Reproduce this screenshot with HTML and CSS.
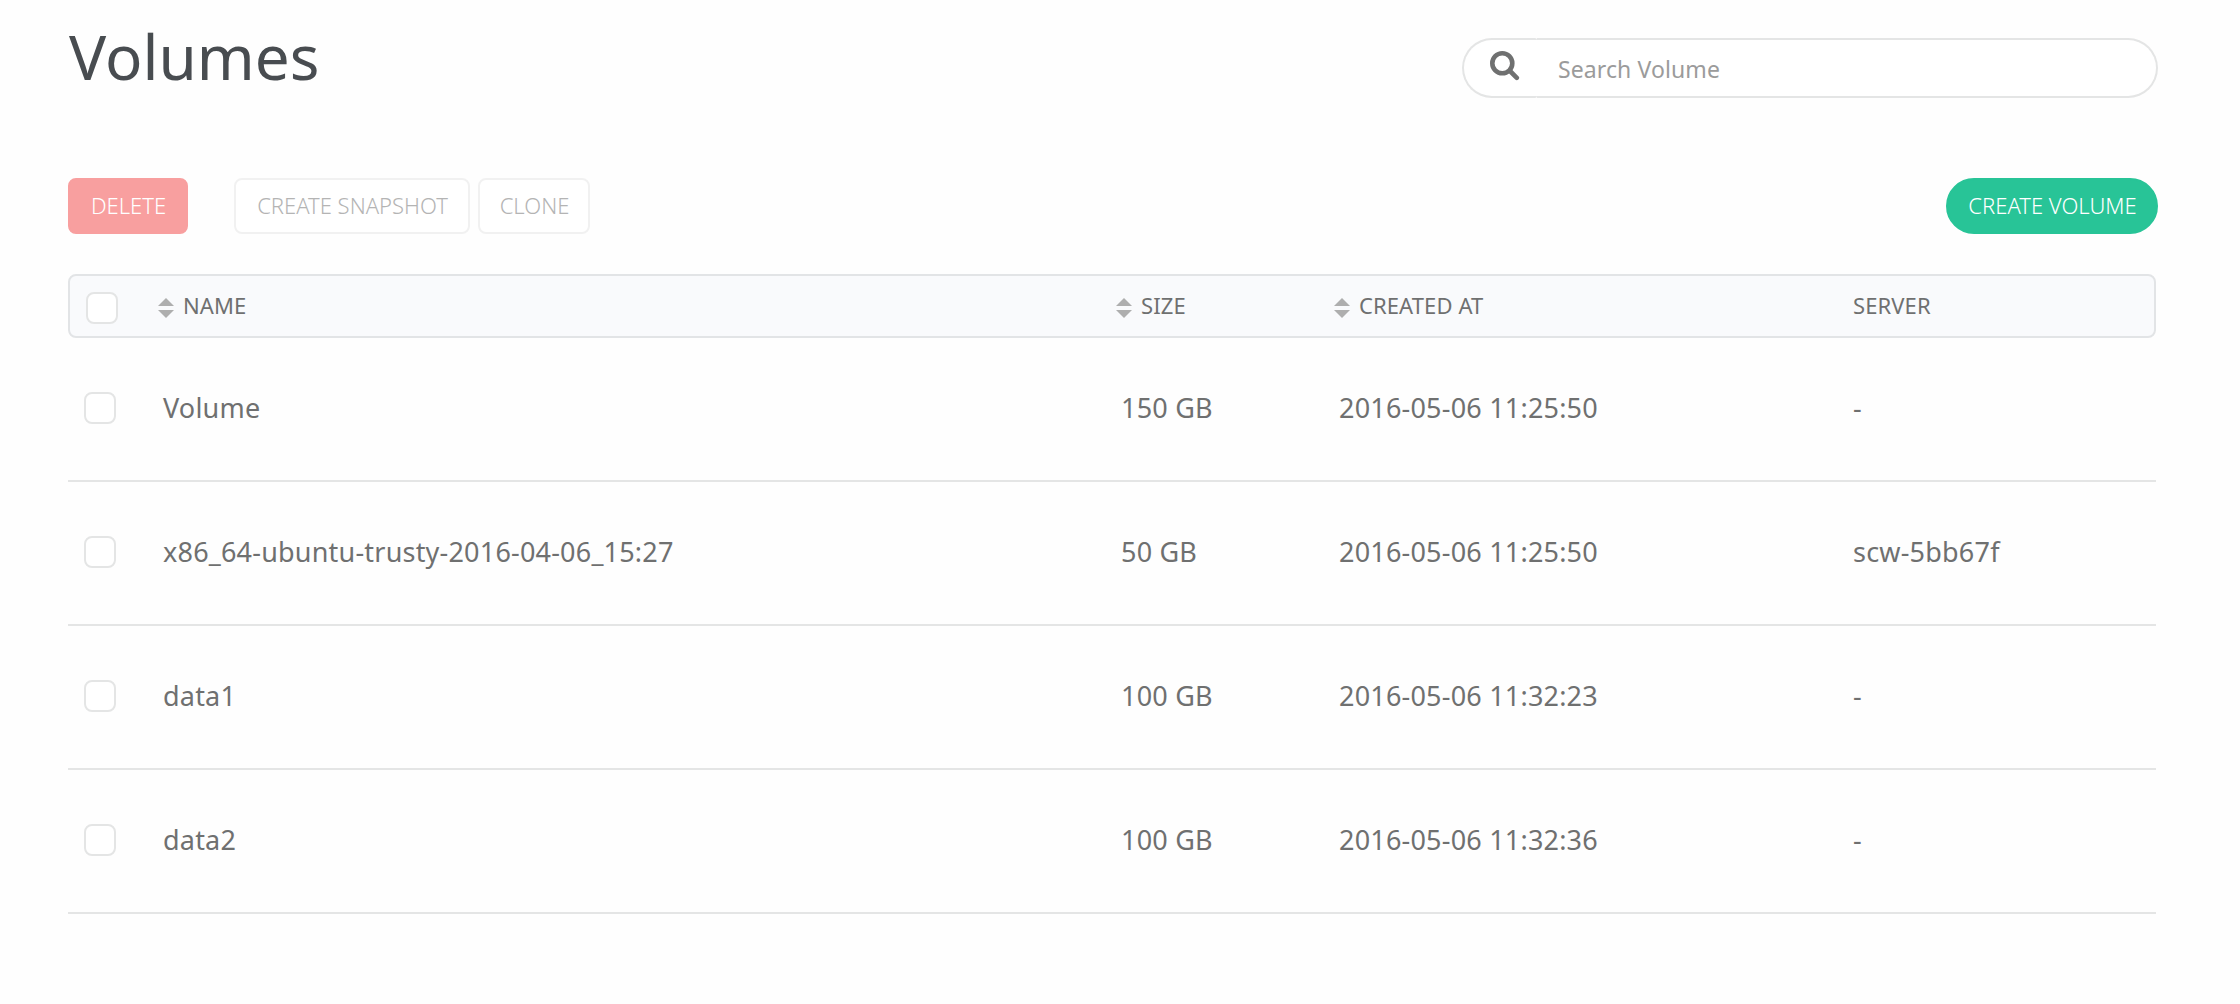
FILE: index.html
```html
<!DOCTYPE html>
<html lang="en">
  <head>
    <meta charset="UTF-8" />
    <meta name="viewport" content="width=device-width, initial-scale=1.0" />
    <title>Volumes</title>
    <link rel="stylesheet" href="styles.css">
  </head>
  <body>
    <div class="page">
      <div class="top">
        <h1 class="title">Volumes</h1>
        <div class="search">
          <button class="search-btn">
            <svg class="search-icon" viewBox="0 0 30 30">
              <circle cx="12.3" cy="12.3" r="10" />
              <path d="M20 20 L26.8 26.8" />
            </svg>
          </button>
          <input class="search-input" type="text" placeholder="Search Volume">
        </div>
      </div>

      <div class="actions">
        <button class="btn btn-delete">DELETE</button>
        <button class="btn btn-snapshot">CREATE SNAPSHOT</button>
        <button class="btn btn-clone">CLONE</button>
        <button class="btn btn-create">CREATE VOLUME</button>
      </div>

      <div class="table">
        <div class="head">
          <div class="check-cell"><span class="checkbox"></span></div>
          <div class="th"><span class="sort"></span>NAME</div>
          <div class="th"><span class="sort"></span>SIZE</div>
          <div class="th"><span class="sort"></span>CREATED AT</div>
          <div class="th th-server">SERVER</div>
        </div>
        <div class="row">
          <div class="check-cell"><span class="checkbox"></span></div>
          <div class="name">Volume</div>
          <div class="size">150 GB</div>
          <div class="date">2016-05-06 11:25:50</div>
          <div class="server">-</div>
        </div>
        <div class="row">
          <div class="check-cell"><span class="checkbox"></span></div>
          <div class="name">x86_64-ubuntu-trusty-2016-04-06_15:27</div>
          <div class="size">50 GB</div>
          <div class="date">2016-05-06 11:25:50</div>
          <div class="server">scw-5bb67f</div>
        </div>
        <div class="row">
          <div class="check-cell"><span class="checkbox"></span></div>
          <div class="name">data1</div>
          <div class="size">100 GB</div>
          <div class="date">2016-05-06 11:32:23</div>
          <div class="server">-</div>
        </div>
        <div class="row">
          <div class="check-cell"><span class="checkbox"></span></div>
          <div class="name">data2</div>
          <div class="size">100 GB</div>
          <div class="date">2016-05-06 11:32:36</div>
          <div class="server">-</div>
        </div>
      </div>
    </div>
  </body>
</html>
```
FILE: styles.css
```css
* {
  margin: 0;
  padding: 0;
  box-sizing: border-box;
}
body {
  background-color: #fefefe;
  color: #6f7070;
  font-family: "Noto Sans", "Open Sans", sans-serif;
}
.page {
  padding: 16px 82px 0 68px;
}

/* title + search */
.top {
  display: flex;
  justify-content: space-between;
  height: 162px;
}
.title {
  height: 80px;
  padding-left: 1px;
  line-height: 80px;
  font-size: 62px;
  font-weight: 400;
  color: #484c50;
}
.search {
  display: flex;
  width: 696px;
  height: 60px;
  margin-top: 22px;
}
.search-btn {
  width: 75px;
  padding: 3px 0 0 26px;
  border: 2px solid #e4e5e5;
  border-right: 0;
  border-radius: 30px 2px 2px 30px;
  background-color: #fff;
  text-align: left;
}
.search-icon {
  display: block;
  width: 30px;
  height: 30px;
  margin-bottom: 8px;
  fill: none;
  stroke: #6f7070;
  stroke-width: 4.6;
  stroke-linecap: round;
}
.search-input {
  flex: 1;
  padding: 2px 20px 0 21px;
  border: 2px solid #e4e5e5;
  border-left: 0;
  border-radius: 0 30px 30px 0;
  background-color: #fff;
  font-family: inherit;
  font-size: 23px;
  letter-spacing: .1px;
}
.search-input::placeholder {
  color: #9b9b9b;
}

/* buttons */
.actions {
  display: flex;
  height: 96px;
}
.btn {
  height: 56px;
  padding: 0 0 2px 1px;
  border: 2px solid #f1f1f1;
  border-radius: 8px;
  background-color: #fff;
  color: #b4b4b4;
  font-family: inherit;
  font-size: 22px;
  font-weight: 300;
  text-align: center;
}
.btn-delete {
  width: 120px;
  margin-right: 46px;
  border-color: #f89f9f;
  background-color: #f89f9f;
  color: #fff;
}
.btn-snapshot {
  width: 236px;
  margin-right: 8px;
}
.btn-clone {
  width: 112px;
}
.btn-create {
  width: 212px;
  margin-left: auto;
  border-color: #28c497;
  border-radius: 28px;
  background-color: #28c497;
  color: #fff;
}

/* table */
.table {
  width: 2088px;
}
.head,
.row {
  display: grid;
  grid-template-columns: 90px 958px 218px 518px 1fr;
  align-items: center;
}
.head {
  grid-template-columns: 88px 958px 218px 518px 1fr;
  height: 64px;
  border: 2px solid #e2e4e6;
  border-radius: 8px;
  background-color: #f9fafc;
}
.row {
  height: 144px;
  padding-bottom: 2px;
  border-bottom: 2px solid #e4e5e5;
  font-size: 27px;
  letter-spacing: .2px;
}
.check-cell {
  padding-left: 16px;
}
.checkbox {
  display: block;
  width: 32px;
  height: 32px;
  border: 2px solid #e4e5e5;
  border-radius: 8px;
  background-color: #fff;
}
.head .checkbox {
  margin-top: 4px;
}
.th {
  display: flex;
  align-items: center;
  padding-bottom: 2px;
  font-size: 22px;
  letter-spacing: .1px;
}
.sort {
  margin: 6px 9px 0 0;
}
.sort::before,
.sort::after {
  content: "";
  display: block;
  border: 8px solid transparent;
}
.sort::before {
  border-top: 0;
  border-bottom-color: #aeaeae;
  margin-bottom: 4px;
}
.sort::after {
  border-bottom: 0;
  border-top-color: #aeaeae;
}
.name,
.size,
.date,
.server {
  padding: 0 0 2px 5px;
}
.server,
.th-server {
  padding-left: 1px;
}
```
